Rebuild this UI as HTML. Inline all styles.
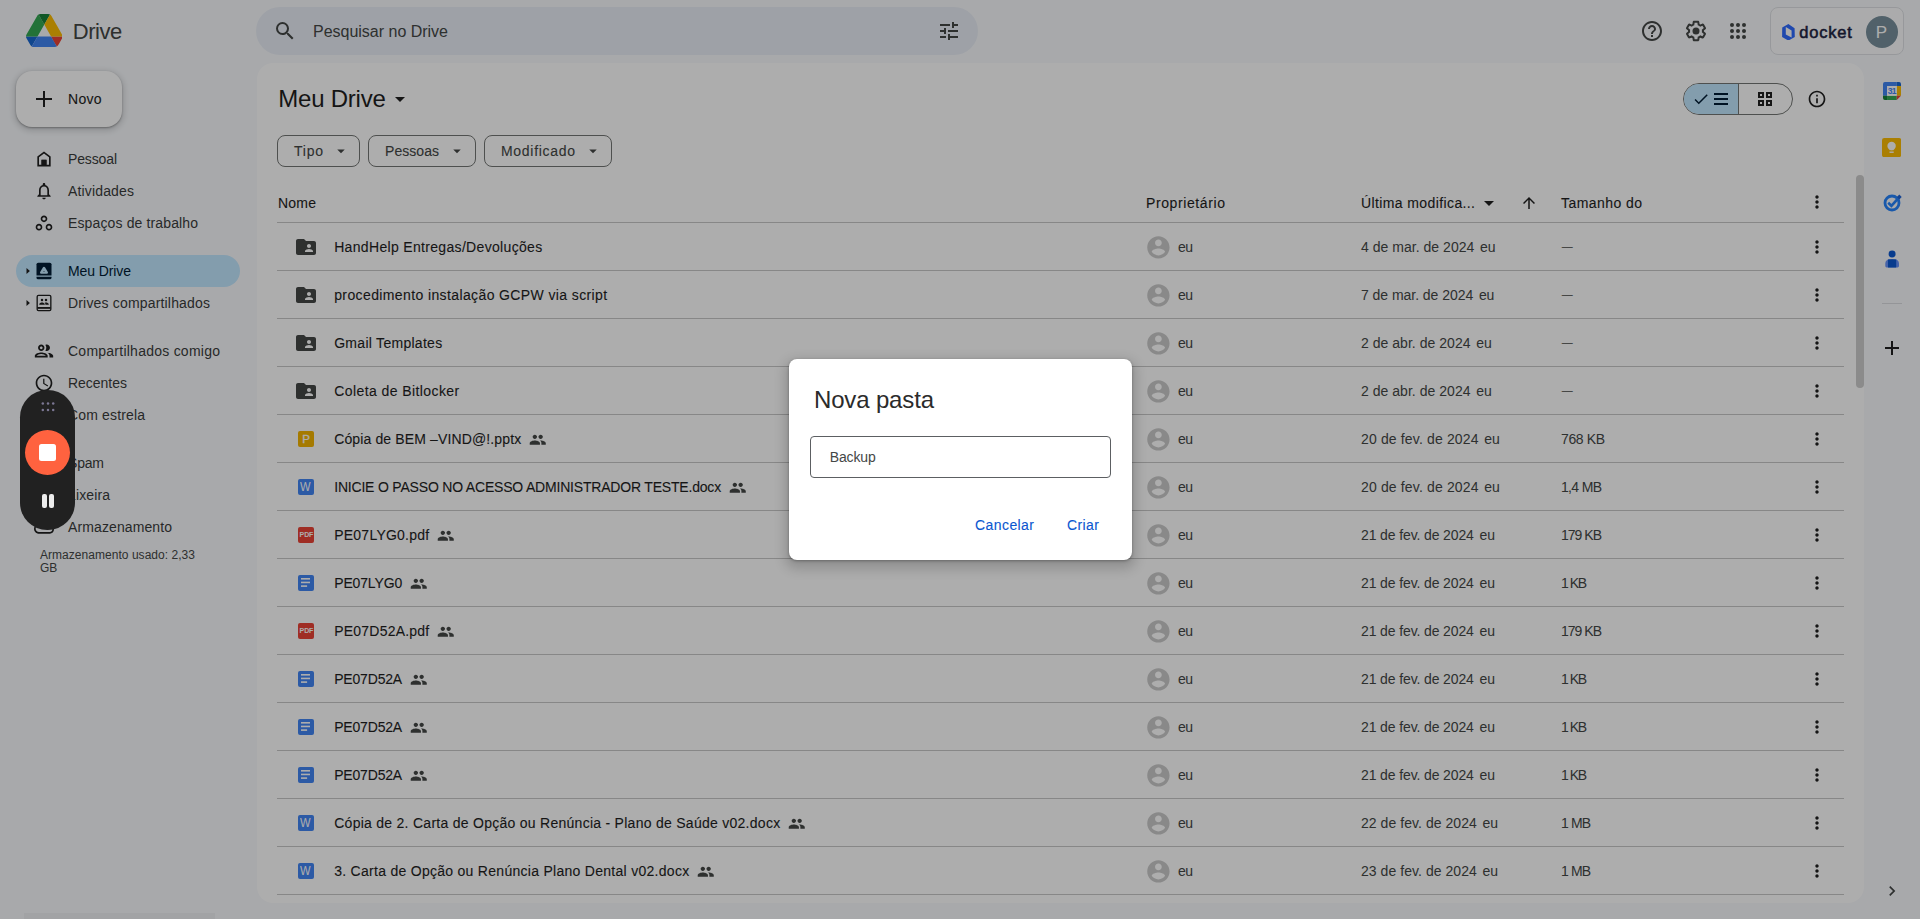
<!DOCTYPE html>
<html lang="pt-BR"><head><meta charset="utf-8"><title>Meu Drive - Google Drive</title>
<style>
*{box-sizing:border-box;margin:0;padding:0}
html,body{width:1920px;height:919px;overflow:hidden;background:#f8fafd;font-family:"Liberation Sans",sans-serif}
#app{position:relative;width:1920px;height:919px;overflow:hidden}
.t{position:absolute;white-space:nowrap;font-family:"Liberation Sans",sans-serif}
.i{position:absolute;display:block}
.b{position:absolute}
.ln{position:absolute;left:277px;width:1567px;height:1px;background:#c7c7c7}
</style></head><body><div id="app">

<svg class="i" style="left:25.600px;top:13.900px" width="36.600" height="33" viewBox="0 0 87.3 78" preserveAspectRatio="none">
<path d="m6.600 66.850 3.850 6.650c.800 1.400 1.950 2.500 3.300 3.300l13.750-23.800h-27.500c0 1.550.400 3.100 1.200 4.500z" fill="#1967d2"/>
<path d="m43.650 25-13.750-23.800c-1.350.800-2.500 1.900-3.300 3.300l-25.400 44a9.060 9.060 0 0 0 -1.200 4.500h27.500z" fill="#34a853"/>
<path d="m73.550 76.800c1.350-.800 2.500-1.900 3.300-3.300l1.600-2.750 7.650-13.250c.800-1.400 1.200-2.950 1.200-4.500h-27.502l5.852 11.500z" fill="#ea4335"/>
<path d="m43.650 25 13.750-23.800c-1.350-.800-2.900-1.200-4.500-1.200h-18.500c-1.600 0-3.150.450-4.500 1.200z" fill="#188038"/>
<path d="m59.800 53h-32.300l-13.750 23.800c1.350.800 2.900 1.200 4.500 1.200h50.800c1.600 0 3.150-.450 4.500-1.200z" fill="#4285f4"/>
<path d="m73.400 26.500-12.700-22c-.800-1.400-1.950-2.500-3.300-3.300l-13.750 23.800 16.150 28h27.450c0-1.550-.400-3.100-1.200-4.500z" fill="#fbbc04"/>
</svg>
<span id="t1" class="t" style="left:72.8px;top:17.6px;font-size:22px;line-height:28px;color:#444746;letter-spacing:-0.461px;">Drive</span>
<div class="b" style="left:256px;top:7px;width:722px;height:48px;border-radius:24px;background:#e9eef6"></div>
<svg class="i" style="left:272.8px;top:19px;" width="24" height="24" viewBox="0 0 24 24" fill="#444746"><path d="M15.5 14h-.79l-.28-.27A6.471 6.471 0 0 0 16 9.5 6.5 6.5 0 1 0 9.5 16c1.61 0 3.09-.59 4.23-1.57l.27.28v.79l5 4.99L20.49 19l-4.99-5zm-6 0C7.01 14 5 11.99 5 9.5S7.01 5 9.5 5 14 7.01 14 9.5 11.99 14 9.5 14z"/></svg>
<span id="t2" class="t" style="left:313px;top:20px;font-size:16px;line-height:24px;color:#444746;letter-spacing:-0.010px;">Pesquisar no Drive</span>
<svg class="i" style="left:936.7px;top:19px;" width="24" height="24" viewBox="0 0 24 24" fill="#444746"><path d="M3 17v2h6v-2H3zM3 5v2h10V5H3zm10 16v-2h8v-2h-8v-2h-2v6h2zM7 9v2H3v2h4v2h2V9H7zm14 4v-2H11v2h10zm-6-4h2V7h4V5h-4V3h-2v6z"/></svg>
<svg class="i" style="left:1640px;top:19px;" width="24" height="24" viewBox="0 0 24 24" fill="#444746"><path d="M11 18h2v-2h-2v2zm1-16C6.48 2 2 6.48 2 12s4.48 10 10 10 10-4.48 10-10S17.52 2 12 2zm0 18c-4.41 0-8-3.59-8-8s3.59-8 8-8 8 3.59 8 8-3.59 8-8 8zm0-14c-2.21 0-4 1.79-4 4h2c0-1.1.9-2 2-2s2 .9 2 2c0 2-3 1.75-3 5h2c0-2.25 3-2.5 3-5 0-2.21-1.79-4-4-4z"/></svg>
<svg class="i" style="left:1684px;top:19px;" width="24" height="24" viewBox="0 0 24 24" fill="#444746"><path d="M13.85 22.25h-3.7c-.74 0-1.36-.54-1.45-1.27l-.27-1.89c-.27-.14-.53-.29-.79-.46l-1.8.72c-.7.26-1.47-.03-1.81-.65L2.2 15.53c-.35-.66-.2-1.44.36-1.88l1.53-1.19c-.01-.15-.02-.3-.02-.46 0-.15.01-.31.02-.46l-1.52-1.19c-.59-.45-.74-1.26-.37-1.88l1.85-3.19c.34-.62 1.11-.9 1.79-.63l1.81.73c.26-.17.52-.32.78-.46l.27-1.91c.09-.7.71-1.25 1.44-1.25h3.7c.74 0 1.36.54 1.45 1.27l.27 1.89c.27.14.53.29.79.46l1.8-.72c.71-.26 1.48.03 1.82.65l1.84 3.18c.36.66.2 1.44-.36 1.88l-1.52 1.19c.01.15.02.3.02.46s-.01.31-.02.46l1.52 1.19c.56.45.72 1.23.37 1.86l-1.86 3.22c-.34.62-1.11.9-1.8.63l-1.8-.72c-.26.17-.52.32-.78.46l-.27 1.91c-.1.68-.72 1.22-1.46 1.22zm-3.23-2h2.76l.37-2.55.53-.22c.44-.18.88-.44 1.34-.78l.45-.34 2.38.96 1.38-2.4-2.03-1.58.07-.56c.03-.26.06-.51.06-.78s-.03-.53-.06-.78l-.07-.56 2.03-1.58-1.39-2.4-2.39.96-.45-.35c-.42-.32-.87-.58-1.33-.77l-.52-.22-.37-2.55h-2.76l-.37 2.55-.53.21c-.44.19-.88.44-1.34.79l-.45.33-2.38-.95-1.39 2.39 2.03 1.58-.07.56a7 7 0 0 0-.06.79c0 .26.02.53.06.78l.07.56-2.03 1.58 1.38 2.4 2.39-.96.45.35c.43.33.86.58 1.33.77l.53.22.38 2.55z"/><circle cx="12" cy="12" r="3.5"/></svg>
<svg class="i" style="left:1726px;top:19px;" width="24" height="24" viewBox="0 0 24 24" fill="#444746"><circle cx="6" cy="6" r="2"/><circle cx="12" cy="6" r="2"/><circle cx="18" cy="6" r="2"/><circle cx="6" cy="12" r="2"/><circle cx="12" cy="12" r="2"/><circle cx="18" cy="12" r="2"/><circle cx="6" cy="18" r="2"/><circle cx="12" cy="18" r="2"/><circle cx="18" cy="18" r="2"/></svg>
<div class="b" style="left:1770px;top:7px;width:134px;height:48px;border-radius:8px;border:1px solid #dfe1e5;background:#fdfdfe"></div>
<svg class="i" style="left:1781.900px;top:23.600px" width="13" height="16.600" viewBox="0 0 13 16.600"><path d="M6.400 0 12.600 4.200 12.800 13 6.400 16.600.1 13 .2 3.500zM3.800 3v7.400l5.800 3.100V6.400z" fill="#2f6bff" fill-rule="evenodd"/></svg>
<span id="t3" class="t" style="left:1799.3px;top:21.1px;font-size:16.5px;line-height:22px;color:#202342;letter-spacing:0.775px;-webkit-text-stroke:.55px #202342;">docket</span>
<div class="b" style="left:1866px;top:16px;width:32px;height:32px;border-radius:50%;background:#78909c"></div>
<span id="t4" class="t" style="left:1875.7px;top:20.5px;font-size:17px;line-height:24px;color:#ffffff;">P</span>
<div class="b" style="left:16px;top:71px;width:106px;height:56px;border-radius:16px;background:#fff;box-shadow:0 1px 2px rgba(0,0,0,.3),0 2px 6px 2px rgba(0,0,0,.15)"></div>
<svg class="i" style="left:32px;top:87px;" width="24" height="24" viewBox="0 0 24 24" fill="#1f1f1f"><path d="M20 13h-7v7h-2v-7H4v-2h7V4h2v7h7v2z"/></svg>
<span id="t5" class="t" style="left:68px;top:89px;font-size:14px;line-height:20px;color:#1f1f1f;letter-spacing:0.271px;-webkit-text-stroke:0.1px #1f1f1f;">Novo</span>
<div class="b" style="left:16px;top:255px;width:224px;height:32px;border-radius:16px;background:#c2e7ff"></div>
<svg class="i" style="left:34px;top:149px;" width="20" height="20" viewBox="0 0 24 24" fill="#1f1f1f"><path d="M12 3L4 9v12h16V9l-8-6zm6 16h-3v-6H9v6H6v-9l6-4.500 6 4.500v9z"/><rect x="9" y="13" width="6" height="6"/></svg>
<span id="t6" class="t" style="left:68px;top:149px;font-size:14px;line-height:20px;color:#3a3c3b;letter-spacing:-0.135px;">Pessoal</span>
<svg class="i" style="left:34px;top:181px;" width="20" height="20" viewBox="0 0 24 24" fill="#1f1f1f"><path d="M12 22c1.1 0 2-.9 2-2h-4c0 1.1.9 2 2 2zm6-6v-5c0-3.070-1.630-5.640-4.500-6.320V4c0-.830-.670-1.500-1.500-1.500s-1.500.670-1.500 1.500v.680C7.640 5.360 6 7.920 6 11v5l-2 2v1h16v-1l-2-2zm-2 1H8v-6c0-2.480 1.510-4.500 4-4.500s4 2.020 4 4.500v6z"/></svg>
<span id="t7" class="t" style="left:68px;top:181px;font-size:14px;line-height:20px;color:#3a3c3b;letter-spacing:0.156px;">Atividades</span>
<svg class="i" style="left:34px;top:213px;" width="20" height="20" viewBox="0 0 24 24" fill="#1f1f1f"><path d="M6 15c1.1 0 2 .9 2 2s-.9 2-2 2-2-.9-2-2 .9-2 2-2m0-2c-2.200 0-4 1.800-4 4s1.800 4 4 4 4-1.800 4-4-1.800-4-4-4zm6-8c1.100 0 2 .900 2 2s-.900 2-2 2-2-.900-2-2 .900-2 2-2m0-2C9.800 3 8 4.800 8 7s1.800 4 4 4 4-1.800 4-4-1.800-4-4-4zm6 12c1.100 0 2 .900 2 2s-.900 2-2 2-2-.900-2-2 .900-2 2-2m0-2c-2.200 0-4 1.800-4 4s1.800 4 4 4 4-1.800 4-4-1.800-4-4-4z"/></svg>
<span id="t8" class="t" style="left:68px;top:213px;font-size:14px;line-height:20px;color:#3a3c3b;letter-spacing:0.131px;">Espaços de trabalho</span>
<svg class="i" style="left:34px;top:261px;" width="20" height="20" viewBox="0 0 24 24" fill="#001d35"><path d="M5 2h14a2 2 0 0 1 2 2v13.500H3V4a2 2 0 0 1 2-2z"/><path d="M3 19h18v1a2 2 0 0 1-2 2H5a2 2 0 0 1-2-2z"/><path d="M12 8.300 15.400 13.900H8.600z" fill="none" stroke="#c2e7ff" stroke-width="2.800" stroke-linejoin="round"/></svg>
<span id="t9" class="t" style="left:68px;top:261px;font-size:14px;line-height:20px;color:#001d35;letter-spacing:-0.100px;">Meu Drive</span>
<svg class="i" style="left:34px;top:293px;" width="20" height="20" viewBox="0 0 24 24" fill="#1f1f1f"><rect x="3.800" y="2.800" width="16.400" height="18.400" rx="1.600" fill="none" stroke="#1f1f1f" stroke-width="1.600"/><rect x="4" y="16.800" width="16" height="2.200"/><circle cx="9.600" cy="8.300" r="1.500"/><circle cx="14.400" cy="8.300" r="1.500"/><path d="M6.300 13.600c0-1.500 2.200-2.300 3.300-2.300s3.300.800 3.300 2.300V14H6.300z"/><path d="M13.700 14v-.400c0-.800-.300-1.400-.900-1.900.500-.200 1.100-.300 1.600-.300 1.100 0 3.300.700 3.300 2.200V14z"/></svg>
<span id="t10" class="t" style="left:68px;top:293px;font-size:14px;line-height:20px;color:#3a3c3b;letter-spacing:0.175px;">Drives compartilhados</span>
<svg class="i" style="left:33px;top:340px;" width="22" height="22" viewBox="0 0 24 24" fill="#1f1f1f"><path fill-rule="evenodd" d="M9 13.600c-2.400 0-7 1.200-7 3.650V19h14v-1.750c0-2.450-4.600-3.650-7-3.650zM3.900 17.300c.700-.900 3-1.950 5.100-1.950s4.400 1.050 5.100 1.950zM9 12c1.930 0 3.500-1.570 3.500-3.500S10.930 5 9 5 5.500 6.570 5.500 8.500 7.070 12 9 12zm0-5c.830 0 1.500.670 1.500 1.500S9.830 10 9 10s-1.500-.670-1.500-1.500S8.170 7 9 7zm7.040 6.810c1.160.840 1.960 1.960 1.960 3.440V19h4v-1.750c0-2.020-3.500-3.170-5.960-3.440zM15 12c1.930 0 3.500-1.570 3.500-3.500S16.930 5 15 5c-.540 0-1.040.130-1.500.350.630.890 1 1.980 1 3.150s-.370 2.260-1 3.150c.460.220.960.350 1.500.350z"/></svg>
<span id="t11" class="t" style="left:68px;top:341px;font-size:14px;line-height:20px;color:#3a3c3b;letter-spacing:0.246px;">Compartilhados comigo</span>
<svg class="i" style="left:34px;top:373px;" width="20" height="20" viewBox="0 0 24 24" fill="#1f1f1f"><path d="M11.990 2C6.470 2 2 6.480 2 12s4.470 10 9.990 10C17.520 22 22 17.520 22 12S17.520 2 11.990 2zM12 20c-4.420 0-8-3.580-8-8s3.580-8 8-8 8 3.580 8 8-3.580 8-8 8zm.5-13H11v6l5.250 3.150.750-1.230-4.500-2.670z"/></svg>
<span id="t12" class="t" style="left:68px;top:373px;font-size:14px;line-height:20px;color:#3a3c3b;letter-spacing:-0.022px;">Recentes</span>
<span id="t13" class="t" style="left:68px;top:405px;font-size:14px;line-height:20px;color:#3a3c3b;letter-spacing:0.153px;">Com estrela</span>
<span id="t14" class="t" style="left:68px;top:453px;font-size:14px;line-height:20px;color:#3a3c3b;letter-spacing:-0.193px;">Spam</span>
<span id="t15" class="t" style="left:68px;top:485px;font-size:14px;line-height:20px;color:#3a3c3b;letter-spacing:0.125px;">Lixeira</span>
<svg class="i" style="left:34px;top:517px;" width="20" height="20" viewBox="0 0 24 24" fill="#1f1f1f"><path d="M19.350 10.040C18.670 6.590 15.640 4 12 4 9.110 4 6.600 5.640 5.350 8.040 2.340 8.360 0 10.910 0 14c0 3.310 2.690 6 6 6h13c2.760 0 5-2.240 5-5 0-2.640-2.050-4.780-4.650-4.960zM19 18H6c-2.210 0-4-1.790-4-4 0-2.050 1.530-3.760 3.560-3.970l1.070-.110.500-.950C8.080 7.140 9.940 6 12 6c2.620 0 4.880 1.860 5.390 4.430l.300 1.500 1.530.110c1.560.100 2.780 1.410 2.780 2.960 0 1.650-1.350 3-3 3z"/></svg>
<span id="t16" class="t" style="left:68px;top:517px;font-size:14px;line-height:20px;color:#3a3c3b;letter-spacing:0.107px;">Armazenamento</span>
<svg class="i" style="left:24px;top:267px" width="8" height="8" viewBox="0 0 8 8"><path d="M2.500 1.100l3.400 2.900-3.400 2.900z" fill="#1f1f1f"/></svg>
<svg class="i" style="left:24px;top:299px" width="8" height="8" viewBox="0 0 8 8"><path d="M2.500 1.100l3.400 2.900-3.400 2.900z" fill="#1f1f1f"/></svg>
<span id="t17" class="t" style="left:40px;top:547.5px;font-size:12px;line-height:14px;color:#444746;letter-spacing:0.037px;">Armazenamento usado: 2,33</span>
<span id="t18" class="t" style="left:40px;top:561px;font-size:12px;line-height:14px;color:#444746;">GB</span>
<div class="b" style="left:24px;top:913px;width:191px;height:6px;background:#eff1f4"></div>
<div class="b" style="left:257px;top:63px;width:1607px;height:840px;border-radius:16px;background:#fff"></div>
<span id="t19" class="t" style="left:278.3px;top:83px;font-size:24px;line-height:32px;color:#1f1f1f;letter-spacing:-0.232px;">Meu Drive</span>
<svg class="i" style="left:388px;top:87px;" width="24" height="24" viewBox="0 0 24 24" fill="#1f1f1f"><path d="M7 10l5 5 5-5z"/></svg>
<div class="b" style="left:277px;top:135px;width:83px;height:32px;border-radius:8px;border:1px solid #747775"></div>
<span id="t20" class="t" style="left:294px;top:141px;font-size:14px;line-height:20px;color:#444746;letter-spacing:0.760px;-webkit-text-stroke:0.1px #444746;">Tipo</span>
<svg class="i" style="left:332px;top:142px;" width="18" height="18" viewBox="0 0 24 24" fill="#444746"><path d="M7 10l5 5 5-5z"/></svg>
<div class="b" style="left:368px;top:135px;width:108px;height:32px;border-radius:8px;border:1px solid #747775"></div>
<span id="t21" class="t" style="left:385px;top:141px;font-size:14px;line-height:20px;color:#444746;letter-spacing:0.049px;-webkit-text-stroke:0.1px #444746;">Pessoas</span>
<svg class="i" style="left:448px;top:142px;" width="18" height="18" viewBox="0 0 24 24" fill="#444746"><path d="M7 10l5 5 5-5z"/></svg>
<div class="b" style="left:484px;top:135px;width:128px;height:32px;border-radius:8px;border:1px solid #747775"></div>
<span id="t22" class="t" style="left:501px;top:141px;font-size:14px;line-height:20px;color:#444746;letter-spacing:0.700px;-webkit-text-stroke:0.1px #444746;">Modificado</span>
<svg class="i" style="left:584px;top:142px;" width="18" height="18" viewBox="0 0 24 24" fill="#444746"><path d="M7 10l5 5 5-5z"/></svg>
<div class="b" style="left:1683px;top:83px;width:110px;height:32px;border-radius:16px;border:1px solid #747775;overflow:hidden"><div style="position:absolute;left:0;top:0;width:55px;height:30px;background:#c2e7ff;border-right:1px solid #747775"></div></div>
<svg class="i" style="left:1692px;top:90px;" width="18" height="18" viewBox="0 0 24 24" fill="#001d35"><path d="M9 16.17L4.83 12l-1.42 1.41L9 19 21 7l-1.41-1.41z"/></svg>
<svg class="i" style="left:1714px;top:93px" width="14" height="12" viewBox="0 0 14 12" fill="#001d35"><rect y="0" width="14" height="2"/><rect y="5" width="14" height="2"/><rect y="10" width="14" height="2"/></svg>
<svg class="i" style="left:1758px;top:92px" width="14" height="14" viewBox="0 0 14 14" fill="none" stroke="#1f1f1f" stroke-width="2"><rect x="1" y="1" width="4" height="4"/><rect x="9" y="1" width="4" height="4"/><rect x="1" y="9" width="4" height="4"/><rect x="9" y="9" width="4" height="4"/></svg>
<svg class="i" style="left:1807px;top:89px;" width="20" height="20" viewBox="0 0 24 24" fill="#1f1f1f"><path d="M11 7h2v2h-2zm0 4h2v6h-2zm1-9C6.48 2 2 6.48 2 12s4.480 10 10 10 10-4.480 10-10S17.520 2 12 2zm0 18c-4.410 0-8-3.590-8-8s3.590-8 8-8 8 3.590 8 8-3.590 8-8 8z"/></svg>
<span id="t23" class="t" style="left:278px;top:193px;font-size:14px;line-height:20px;color:#1f1f1f;letter-spacing:0.214px;-webkit-text-stroke:0.1px #1f1f1f;">Nome</span>
<span id="t24" class="t" style="left:1146px;top:193px;font-size:14px;line-height:20px;color:#1f1f1f;letter-spacing:0.602px;-webkit-text-stroke:0.1px #1f1f1f;">Proprietário</span>
<span id="t25" class="t" style="left:1361px;top:193px;font-size:14px;line-height:20px;color:#1f1f1f;letter-spacing:0.391px;-webkit-text-stroke:0.1px #1f1f1f;">Última modifica...</span>
<svg class="i" style="left:1477px;top:191px;" width="24" height="24" viewBox="0 0 24 24" fill="#1f1f1f"><path d="M7 10l5 5 5-5z"/></svg>
<svg class="i" style="left:1519.5px;top:193.5px;" width="18" height="18" viewBox="0 0 24 24" fill="#1f1f1f"><path d="M4 12l1.41 1.41L11 7.83V20h2V7.83l5.58 5.59L20 12l-8-8-8 8z"/></svg>
<span id="t26" class="t" style="left:1561px;top:193px;font-size:14px;line-height:20px;color:#1f1f1f;letter-spacing:0.438px;-webkit-text-stroke:0.1px #1f1f1f;">Tamanho do</span>
<svg class="i" style="left:1807px;top:192px;" width="20" height="20" viewBox="0 0 24 24" fill="#1f1f1f"><path d="M12 8c1.1 0 2-.9 2-2s-.9-2-2-2-2 .9-2 2 .9 2 2 2zm0 2c-1.1 0-2 .9-2 2s.9 2 2 2 2-.9 2-2-.9-2-2-2zm0 6c-1.1 0-2 .9-2 2s.9 2 2 2 2-.9 2-2-.9-2-2-2z"/></svg>
<div class="ln" style="top:222px"></div>
<svg class="i" style="left:294px;top:235px;" width="24" height="24" viewBox="0 0 24 24" fill="#444746"><path d="M20 6h-8l-2-2H4c-1.1 0-1.99.9-1.99 2L2 18c0 1.1.9 2 2 2h16c1.1 0 2-.9 2-2V8c0-1.1-.9-2-2-2zm-5 3c1.1 0 2 .9 2 2s-.9 2-2 2-2-.9-2-2 .9-2 2-2zm4 8h-8v-1c0-1.33 2.67-2 4-2s4 .67 4 2v1z"/></svg>
<span id="t27" class="t" style="left:334.2px;top:237px;font-size:14px;line-height:20px;color:#1f1f1f;letter-spacing:0.325px;-webkit-text-stroke:0.1px #1f1f1f;">HandHelp Entregas/Devoluções</span>
<svg class="i" style="left:1144.6px;top:233.6px;" width="26.8" height="26.8" viewBox="0 0 24 24" fill="#cbcbcb"><path d="M12 2C6.48 2 2 6.48 2 12s4.480 10 10 10 10-4.480 10-10S17.520 2 12 2zm0 3c1.660 0 3 1.340 3 3s-1.340 3-3 3-3-1.340-3-3 1.340-3 3-3zm0 14.200c-2.500 0-4.710-1.280-6-3.220.030-1.990 4-3.080 6-3.080 1.990 0 5.970 1.090 6 3.080-1.290 1.940-3.500 3.220-6 3.220z"/></svg>
<span id="t28" class="t" style="left:1178px;top:237px;font-size:14px;line-height:20px;color:#444746;letter-spacing:-0.578px;">eu</span>
<span id="t29" class="t" style="left:1361px;top:237px;font-size:14px;line-height:20px;color:#444746;letter-spacing:0.027px;">4 de mar. de 2024</span>
<span id="t30" class="t" style="left:1480px;top:237px;font-size:14px;line-height:20px;color:#444746;letter-spacing:-0.078px;">eu</span>
<span id="t31" class="t" style="left:1561.8px;top:236.4px;font-size:11px;line-height:20px;color:#444746;">—</span>
<svg class="i" style="left:1807px;top:237px;" width="20" height="20" viewBox="0 0 24 24" fill="#1f1f1f"><path d="M12 8c1.1 0 2-.9 2-2s-.9-2-2-2-2 .9-2 2 .9 2 2 2zm0 2c-1.1 0-2 .9-2 2s.9 2 2 2 2-.9 2-2-.9-2-2-2zm0 6c-1.1 0-2 .9-2 2s.9 2 2 2 2-.9 2-2-.9-2-2-2z"/></svg>
<div class="ln" style="top:270px"></div>
<svg class="i" style="left:294px;top:283px;" width="24" height="24" viewBox="0 0 24 24" fill="#444746"><path d="M20 6h-8l-2-2H4c-1.1 0-1.99.9-1.99 2L2 18c0 1.1.9 2 2 2h16c1.1 0 2-.9 2-2V8c0-1.1-.9-2-2-2zm-5 3c1.1 0 2 .9 2 2s-.9 2-2 2-2-.9-2-2 .9-2 2-2zm4 8h-8v-1c0-1.33 2.67-2 4-2s4 .67 4 2v1z"/></svg>
<span id="t32" class="t" style="left:334.2px;top:285px;font-size:14px;line-height:20px;color:#1f1f1f;letter-spacing:0.386px;-webkit-text-stroke:0.1px #1f1f1f;">procedimento instalação GCPW via script</span>
<svg class="i" style="left:1144.6px;top:281.6px;" width="26.8" height="26.8" viewBox="0 0 24 24" fill="#cbcbcb"><path d="M12 2C6.48 2 2 6.48 2 12s4.480 10 10 10 10-4.480 10-10S17.520 2 12 2zm0 3c1.660 0 3 1.340 3 3s-1.340 3-3 3-3-1.340-3-3 1.340-3 3-3zm0 14.200c-2.500 0-4.710-1.280-6-3.220.030-1.990 4-3.080 6-3.080 1.990 0 5.970 1.090 6 3.080-1.290 1.940-3.500 3.220-6 3.220z"/></svg>
<span id="t33" class="t" style="left:1178px;top:285px;font-size:14px;line-height:20px;color:#444746;letter-spacing:-0.578px;">eu</span>
<span id="t34" class="t" style="left:1361px;top:285px;font-size:14px;line-height:20px;color:#444746;letter-spacing:-0.042px;">7 de mar. de 2024</span>
<span id="t35" class="t" style="left:1478.9px;top:285px;font-size:14px;line-height:20px;color:#444746;letter-spacing:-0.078px;">eu</span>
<span id="t36" class="t" style="left:1561.8px;top:284.4px;font-size:11px;line-height:20px;color:#444746;">—</span>
<svg class="i" style="left:1807px;top:285px;" width="20" height="20" viewBox="0 0 24 24" fill="#1f1f1f"><path d="M12 8c1.1 0 2-.9 2-2s-.9-2-2-2-2 .9-2 2 .9 2 2 2zm0 2c-1.1 0-2 .9-2 2s.9 2 2 2 2-.9 2-2-.9-2-2-2zm0 6c-1.1 0-2 .9-2 2s.9 2 2 2 2-.9 2-2-.9-2-2-2z"/></svg>
<div class="ln" style="top:318px"></div>
<svg class="i" style="left:294px;top:331px;" width="24" height="24" viewBox="0 0 24 24" fill="#444746"><path d="M20 6h-8l-2-2H4c-1.1 0-1.99.9-1.99 2L2 18c0 1.1.9 2 2 2h16c1.1 0 2-.9 2-2V8c0-1.1-.9-2-2-2zm-5 3c1.1 0 2 .9 2 2s-.9 2-2 2-2-.9-2-2 .9-2 2-2zm4 8h-8v-1c0-1.33 2.67-2 4-2s4 .67 4 2v1z"/></svg>
<span id="t37" class="t" style="left:334.2px;top:333px;font-size:14px;line-height:20px;color:#1f1f1f;letter-spacing:0.285px;-webkit-text-stroke:0.1px #1f1f1f;">Gmail Templates</span>
<svg class="i" style="left:1144.6px;top:329.6px;" width="26.8" height="26.8" viewBox="0 0 24 24" fill="#cbcbcb"><path d="M12 2C6.48 2 2 6.48 2 12s4.480 10 10 10 10-4.480 10-10S17.520 2 12 2zm0 3c1.660 0 3 1.340 3 3s-1.340 3-3 3-3-1.340-3-3 1.340-3 3-3zm0 14.200c-2.500 0-4.710-1.280-6-3.220.030-1.990 4-3.080 6-3.080 1.990 0 5.970 1.090 6 3.080-1.290 1.940-3.500 3.220-6 3.220z"/></svg>
<span id="t38" class="t" style="left:1178px;top:333px;font-size:14px;line-height:20px;color:#444746;letter-spacing:-0.578px;">eu</span>
<span id="t39" class="t" style="left:1361px;top:333px;font-size:14px;line-height:20px;color:#444746;letter-spacing:0.031px;">2 de abr. de 2024</span>
<span id="t40" class="t" style="left:1476.2px;top:333px;font-size:14px;line-height:20px;color:#444746;letter-spacing:-0.078px;">eu</span>
<span id="t41" class="t" style="left:1561.8px;top:332.4px;font-size:11px;line-height:20px;color:#444746;">—</span>
<svg class="i" style="left:1807px;top:333px;" width="20" height="20" viewBox="0 0 24 24" fill="#1f1f1f"><path d="M12 8c1.1 0 2-.9 2-2s-.9-2-2-2-2 .9-2 2 .9 2 2 2zm0 2c-1.1 0-2 .9-2 2s.9 2 2 2 2-.9 2-2-.9-2-2-2zm0 6c-1.1 0-2 .9-2 2s.9 2 2 2 2-.9 2-2-.9-2-2-2z"/></svg>
<div class="ln" style="top:366px"></div>
<svg class="i" style="left:294px;top:379px;" width="24" height="24" viewBox="0 0 24 24" fill="#444746"><path d="M20 6h-8l-2-2H4c-1.1 0-1.99.9-1.99 2L2 18c0 1.1.9 2 2 2h16c1.1 0 2-.9 2-2V8c0-1.1-.9-2-2-2zm-5 3c1.1 0 2 .9 2 2s-.9 2-2 2-2-.9-2-2 .9-2 2-2zm4 8h-8v-1c0-1.33 2.67-2 4-2s4 .67 4 2v1z"/></svg>
<span id="t42" class="t" style="left:334.2px;top:381px;font-size:14px;line-height:20px;color:#1f1f1f;letter-spacing:0.416px;-webkit-text-stroke:0.1px #1f1f1f;">Coleta de Bitlocker</span>
<svg class="i" style="left:1144.6px;top:377.6px;" width="26.8" height="26.8" viewBox="0 0 24 24" fill="#cbcbcb"><path d="M12 2C6.48 2 2 6.48 2 12s4.480 10 10 10 10-4.480 10-10S17.520 2 12 2zm0 3c1.660 0 3 1.340 3 3s-1.340 3-3 3-3-1.340-3-3 1.340-3 3-3zm0 14.200c-2.500 0-4.710-1.280-6-3.220.030-1.990 4-3.080 6-3.080 1.990 0 5.970 1.090 6 3.080-1.290 1.940-3.500 3.220-6 3.220z"/></svg>
<span id="t43" class="t" style="left:1178px;top:381px;font-size:14px;line-height:20px;color:#444746;letter-spacing:-0.578px;">eu</span>
<span id="t44" class="t" style="left:1361px;top:381px;font-size:14px;line-height:20px;color:#444746;letter-spacing:0.031px;">2 de abr. de 2024</span>
<span id="t45" class="t" style="left:1476.2px;top:381px;font-size:14px;line-height:20px;color:#444746;letter-spacing:-0.078px;">eu</span>
<span id="t46" class="t" style="left:1561.8px;top:380.4px;font-size:11px;line-height:20px;color:#444746;">—</span>
<svg class="i" style="left:1807px;top:381px;" width="20" height="20" viewBox="0 0 24 24" fill="#1f1f1f"><path d="M12 8c1.1 0 2-.9 2-2s-.9-2-2-2-2 .9-2 2 .9 2 2 2zm0 2c-1.1 0-2 .9-2 2s.9 2 2 2 2-.9 2-2-.9-2-2-2zm0 6c-1.1 0-2 .9-2 2s.9 2 2 2 2-.9 2-2-.9-2-2-2z"/></svg>
<div class="ln" style="top:414px"></div>
<div class="b" style="left:298px;top:431px;width:16px;height:16px;border-radius:2px;background:#f4b400"></div><span id="t47" class="t" style="left:302.2px;top:432.4px;font-size:11.5px;line-height:14px;color:#fff;-webkit-text-stroke:.3px #fff;">P</span>
<span id="t48" class="t" style="left:334.2px;top:429px;font-size:14px;line-height:20px;color:#1f1f1f;letter-spacing:0.131px;-webkit-text-stroke:0.1px #1f1f1f;">Cópia de BEM –VIND@!.pptx</span>
<svg class="i" style="left:528.55px;top:430.55px;" width="17.5" height="17.5" viewBox="0 0 24 24" fill="#444746"><path d="M16 11c1.66 0 2.99-1.34 2.99-3S17.66 5 16 5c-1.66 0-3 1.34-3 3s1.34 3 3 3zm-8 0c1.66 0 2.99-1.34 2.99-3S9.66 5 8 5C6.34 5 5 6.34 5 8s1.34 3 3 3zm0 2c-2.33 0-7 1.17-7 3.5V19h14v-2.500c0-2.330-4.670-3.500-7-3.500zm8 0c-.29 0-.62.02-.97.05 1.160.840 1.970 1.970 1.970 3.450V19h6v-2.500c0-2.330-4.670-3.500-7-3.500z"/></svg>
<svg class="i" style="left:1144.6px;top:425.6px;" width="26.8" height="26.8" viewBox="0 0 24 24" fill="#cbcbcb"><path d="M12 2C6.48 2 2 6.48 2 12s4.480 10 10 10 10-4.480 10-10S17.520 2 12 2zm0 3c1.660 0 3 1.340 3 3s-1.340 3-3 3-3-1.340-3-3 1.340-3 3-3zm0 14.200c-2.500 0-4.710-1.280-6-3.220.030-1.990 4-3.080 6-3.080 1.990 0 5.970 1.090 6 3.080-1.290 1.940-3.500 3.220-6 3.220z"/></svg>
<span id="t49" class="t" style="left:1178px;top:429px;font-size:14px;line-height:20px;color:#444746;letter-spacing:-0.578px;">eu</span>
<span id="t50" class="t" style="left:1361px;top:429px;font-size:14px;line-height:20px;color:#444746;letter-spacing:0.150px;">20 de fev. de 2024</span>
<span id="t51" class="t" style="left:1484.2px;top:429px;font-size:14px;line-height:20px;color:#444746;letter-spacing:-0.078px;">eu</span>
<span id="t52" class="t" style="left:1561px;top:429px;font-size:14px;line-height:20px;color:#444746;letter-spacing:-0.388px;">768 KB</span>
<svg class="i" style="left:1807px;top:429px;" width="20" height="20" viewBox="0 0 24 24" fill="#1f1f1f"><path d="M12 8c1.1 0 2-.9 2-2s-.9-2-2-2-2 .9-2 2 .9 2 2 2zm0 2c-1.1 0-2 .9-2 2s.9 2 2 2 2-.9 2-2-.9-2-2-2zm0 6c-1.1 0-2 .9-2 2s.9 2 2 2 2-.9 2-2-.9-2-2-2z"/></svg>
<div class="ln" style="top:462px"></div>
<div class="b" style="left:298px;top:479px;width:16px;height:16px;border-radius:2px;background:#4285f4"></div><span id="t53" class="t" style="left:299.85px;top:480.3px;font-size:13px;line-height:14px;color:#fff;transform:scaleX(.86);transform-origin:0 50%;">W</span>
<span id="t54" class="t" style="left:334.2px;top:477px;font-size:14px;line-height:20px;color:#1f1f1f;letter-spacing:-0.193px;-webkit-text-stroke:0.1px #1f1f1f;">INICIE O PASSO NO ACESSO ADMINISTRADOR TESTE.docx</span>
<svg class="i" style="left:728.55px;top:478.55px;" width="17.5" height="17.5" viewBox="0 0 24 24" fill="#444746"><path d="M16 11c1.66 0 2.99-1.34 2.99-3S17.66 5 16 5c-1.66 0-3 1.34-3 3s1.34 3 3 3zm-8 0c1.66 0 2.99-1.34 2.99-3S9.66 5 8 5C6.34 5 5 6.34 5 8s1.34 3 3 3zm0 2c-2.33 0-7 1.17-7 3.5V19h14v-2.500c0-2.330-4.670-3.500-7-3.500zm8 0c-.29 0-.62.02-.97.05 1.160.840 1.970 1.970 1.970 3.450V19h6v-2.500c0-2.330-4.670-3.500-7-3.500z"/></svg>
<svg class="i" style="left:1144.6px;top:473.6px;" width="26.8" height="26.8" viewBox="0 0 24 24" fill="#cbcbcb"><path d="M12 2C6.48 2 2 6.48 2 12s4.480 10 10 10 10-4.480 10-10S17.520 2 12 2zm0 3c1.660 0 3 1.340 3 3s-1.340 3-3 3-3-1.340-3-3 1.340-3 3-3zm0 14.200c-2.500 0-4.710-1.280-6-3.220.030-1.990 4-3.080 6-3.080 1.990 0 5.970 1.090 6 3.080-1.290 1.940-3.500 3.220-6 3.220z"/></svg>
<span id="t55" class="t" style="left:1178px;top:477px;font-size:14px;line-height:20px;color:#444746;letter-spacing:-0.578px;">eu</span>
<span id="t56" class="t" style="left:1361px;top:477px;font-size:14px;line-height:20px;color:#444746;letter-spacing:0.150px;">20 de fev. de 2024</span>
<span id="t57" class="t" style="left:1484.2px;top:477px;font-size:14px;line-height:20px;color:#444746;letter-spacing:-0.078px;">eu</span>
<span id="t58" class="t" style="left:1561px;top:477px;font-size:14px;line-height:20px;color:#444746;letter-spacing:-0.672px;">1,4 MB</span>
<svg class="i" style="left:1807px;top:477px;" width="20" height="20" viewBox="0 0 24 24" fill="#1f1f1f"><path d="M12 8c1.1 0 2-.9 2-2s-.9-2-2-2-2 .9-2 2 .9 2 2 2zm0 2c-1.1 0-2 .9-2 2s.9 2 2 2 2-.9 2-2-.9-2-2-2zm0 6c-1.1 0-2 .9-2 2s.9 2 2 2 2-.9 2-2-.9-2-2-2z"/></svg>
<div class="ln" style="top:510px"></div>
<div class="b" style="left:298px;top:527px;width:16px;height:16px;border-radius:2px;background:#ea4335"></div><span id="t59" class="t" style="left:299.6px;top:530.4px;font-size:7px;line-height:10px;color:#fff;font-weight:700;letter-spacing:-.1px;">PDF</span>
<span id="t60" class="t" style="left:334.2px;top:525px;font-size:14px;line-height:20px;color:#1f1f1f;letter-spacing:0.239px;-webkit-text-stroke:0.1px #1f1f1f;">PE07LYG0.pdf</span>
<svg class="i" style="left:436.55px;top:526.55px;" width="17.5" height="17.5" viewBox="0 0 24 24" fill="#444746"><path d="M16 11c1.66 0 2.99-1.34 2.99-3S17.66 5 16 5c-1.66 0-3 1.34-3 3s1.34 3 3 3zm-8 0c1.66 0 2.99-1.34 2.99-3S9.66 5 8 5C6.34 5 5 6.34 5 8s1.34 3 3 3zm0 2c-2.33 0-7 1.17-7 3.5V19h14v-2.500c0-2.330-4.670-3.500-7-3.500zm8 0c-.29 0-.62.02-.97.05 1.160.840 1.970 1.970 1.970 3.450V19h6v-2.500c0-2.330-4.670-3.500-7-3.500z"/></svg>
<svg class="i" style="left:1144.6px;top:521.6px;" width="26.8" height="26.8" viewBox="0 0 24 24" fill="#cbcbcb"><path d="M12 2C6.48 2 2 6.48 2 12s4.480 10 10 10 10-4.480 10-10S17.520 2 12 2zm0 3c1.660 0 3 1.340 3 3s-1.340 3-3 3-3-1.340-3-3 1.340-3 3-3zm0 14.200c-2.500 0-4.710-1.280-6-3.220.030-1.990 4-3.080 6-3.080 1.990 0 5.970 1.090 6 3.080-1.290 1.940-3.500 3.220-6 3.220z"/></svg>
<span id="t61" class="t" style="left:1178px;top:525px;font-size:14px;line-height:20px;color:#444746;letter-spacing:-0.578px;">eu</span>
<span id="t62" class="t" style="left:1361px;top:525px;font-size:14px;line-height:20px;color:#444746;letter-spacing:-0.121px;">21 de fev. de 2024</span>
<span id="t63" class="t" style="left:1479.6px;top:525px;font-size:14px;line-height:20px;color:#444746;letter-spacing:-0.078px;">eu</span>
<span id="t64" class="t" style="left:1561px;top:525px;font-size:14px;line-height:20px;color:#444746;letter-spacing:-0.988px;">179 KB</span>
<svg class="i" style="left:1807px;top:525px;" width="20" height="20" viewBox="0 0 24 24" fill="#1f1f1f"><path d="M12 8c1.1 0 2-.9 2-2s-.9-2-2-2-2 .9-2 2 .9 2 2 2zm0 2c-1.1 0-2 .9-2 2s.9 2 2 2 2-.9 2-2-.9-2-2-2zm0 6c-1.1 0-2 .9-2 2s.9 2 2 2 2-.9 2-2-.9-2-2-2z"/></svg>
<div class="ln" style="top:558px"></div>
<div class="b" style="left:298px;top:575px;width:16px;height:16px;border-radius:2px;background:#4285f4"></div><svg class="i" style="left:301.400px;top:578.4px" width="9" height="9" viewBox="0 0 9 9" fill="#fff"><rect y="0" width="9" height="1.600"/><rect y="3.650" width="9" height="1.600"/><rect y="7.300" width="6.100" height="1.600"/></svg>
<span id="t65" class="t" style="left:334.2px;top:573px;font-size:14px;line-height:20px;color:#1f1f1f;letter-spacing:-0.145px;-webkit-text-stroke:0.1px #1f1f1f;">PE07LYG0</span>
<svg class="i" style="left:409.55px;top:574.55px;" width="17.5" height="17.5" viewBox="0 0 24 24" fill="#444746"><path d="M16 11c1.66 0 2.99-1.34 2.99-3S17.66 5 16 5c-1.66 0-3 1.34-3 3s1.34 3 3 3zm-8 0c1.66 0 2.99-1.34 2.99-3S9.66 5 8 5C6.34 5 5 6.34 5 8s1.34 3 3 3zm0 2c-2.33 0-7 1.17-7 3.5V19h14v-2.500c0-2.330-4.670-3.500-7-3.500zm8 0c-.29 0-.62.02-.97.05 1.160.840 1.970 1.970 1.970 3.450V19h6v-2.500c0-2.330-4.670-3.500-7-3.500z"/></svg>
<svg class="i" style="left:1144.6px;top:569.6px;" width="26.8" height="26.8" viewBox="0 0 24 24" fill="#cbcbcb"><path d="M12 2C6.48 2 2 6.48 2 12s4.480 10 10 10 10-4.480 10-10S17.520 2 12 2zm0 3c1.660 0 3 1.340 3 3s-1.340 3-3 3-3-1.340-3-3 1.340-3 3-3zm0 14.200c-2.500 0-4.710-1.280-6-3.220.030-1.990 4-3.080 6-3.080 1.990 0 5.970 1.090 6 3.080-1.290 1.940-3.500 3.220-6 3.220z"/></svg>
<span id="t66" class="t" style="left:1178px;top:573px;font-size:14px;line-height:20px;color:#444746;letter-spacing:-0.578px;">eu</span>
<span id="t67" class="t" style="left:1361px;top:573px;font-size:14px;line-height:20px;color:#444746;letter-spacing:-0.121px;">21 de fev. de 2024</span>
<span id="t68" class="t" style="left:1479.6px;top:573px;font-size:14px;line-height:20px;color:#444746;letter-spacing:-0.078px;">eu</span>
<span id="t69" class="t" style="left:1561px;top:573px;font-size:14px;line-height:20px;color:#444746;letter-spacing:-1.453px;">1 KB</span>
<svg class="i" style="left:1807px;top:573px;" width="20" height="20" viewBox="0 0 24 24" fill="#1f1f1f"><path d="M12 8c1.1 0 2-.9 2-2s-.9-2-2-2-2 .9-2 2 .9 2 2 2zm0 2c-1.1 0-2 .9-2 2s.9 2 2 2 2-.9 2-2-.9-2-2-2zm0 6c-1.1 0-2 .9-2 2s.9 2 2 2 2-.9 2-2-.9-2-2-2z"/></svg>
<div class="ln" style="top:606px"></div>
<div class="b" style="left:298px;top:623px;width:16px;height:16px;border-radius:2px;background:#ea4335"></div><span id="t70" class="t" style="left:299.6px;top:626.4px;font-size:7px;line-height:10px;color:#fff;font-weight:700;letter-spacing:-.1px;">PDF</span>
<span id="t71" class="t" style="left:334.2px;top:621px;font-size:14px;line-height:20px;color:#1f1f1f;letter-spacing:0.216px;-webkit-text-stroke:0.1px #1f1f1f;">PE07D52A.pdf</span>
<svg class="i" style="left:436.55px;top:622.55px;" width="17.5" height="17.5" viewBox="0 0 24 24" fill="#444746"><path d="M16 11c1.66 0 2.99-1.34 2.99-3S17.66 5 16 5c-1.66 0-3 1.34-3 3s1.34 3 3 3zm-8 0c1.66 0 2.99-1.34 2.99-3S9.66 5 8 5C6.34 5 5 6.34 5 8s1.34 3 3 3zm0 2c-2.33 0-7 1.17-7 3.5V19h14v-2.500c0-2.330-4.670-3.500-7-3.500zm8 0c-.29 0-.62.02-.97.05 1.160.840 1.970 1.970 1.970 3.450V19h6v-2.500c0-2.330-4.670-3.500-7-3.500z"/></svg>
<svg class="i" style="left:1144.6px;top:617.6px;" width="26.8" height="26.8" viewBox="0 0 24 24" fill="#cbcbcb"><path d="M12 2C6.48 2 2 6.48 2 12s4.480 10 10 10 10-4.480 10-10S17.520 2 12 2zm0 3c1.660 0 3 1.340 3 3s-1.340 3-3 3-3-1.340-3-3 1.340-3 3-3zm0 14.200c-2.500 0-4.710-1.280-6-3.220.030-1.990 4-3.080 6-3.080 1.990 0 5.970 1.090 6 3.080-1.290 1.940-3.500 3.220-6 3.220z"/></svg>
<span id="t72" class="t" style="left:1178px;top:621px;font-size:14px;line-height:20px;color:#444746;letter-spacing:-0.578px;">eu</span>
<span id="t73" class="t" style="left:1361px;top:621px;font-size:14px;line-height:20px;color:#444746;letter-spacing:-0.121px;">21 de fev. de 2024</span>
<span id="t74" class="t" style="left:1479.6px;top:621px;font-size:14px;line-height:20px;color:#444746;letter-spacing:-0.078px;">eu</span>
<span id="t75" class="t" style="left:1561px;top:621px;font-size:14px;line-height:20px;color:#444746;letter-spacing:-0.988px;">179 KB</span>
<svg class="i" style="left:1807px;top:621px;" width="20" height="20" viewBox="0 0 24 24" fill="#1f1f1f"><path d="M12 8c1.1 0 2-.9 2-2s-.9-2-2-2-2 .9-2 2 .9 2 2 2zm0 2c-1.1 0-2 .9-2 2s.9 2 2 2 2-.9 2-2-.9-2-2-2zm0 6c-1.1 0-2 .9-2 2s.9 2 2 2 2-.9 2-2-.9-2-2-2z"/></svg>
<div class="ln" style="top:654px"></div>
<div class="b" style="left:298px;top:671px;width:16px;height:16px;border-radius:2px;background:#4285f4"></div><svg class="i" style="left:301.400px;top:674.4px" width="9" height="9" viewBox="0 0 9 9" fill="#fff"><rect y="0" width="9" height="1.600"/><rect y="3.650" width="9" height="1.600"/><rect y="7.300" width="6.100" height="1.600"/></svg>
<span id="t76" class="t" style="left:334.2px;top:669px;font-size:14px;line-height:20px;color:#1f1f1f;letter-spacing:-0.183px;-webkit-text-stroke:0.1px #1f1f1f;">PE07D52A</span>
<svg class="i" style="left:409.55px;top:670.55px;" width="17.5" height="17.5" viewBox="0 0 24 24" fill="#444746"><path d="M16 11c1.66 0 2.99-1.34 2.99-3S17.66 5 16 5c-1.66 0-3 1.34-3 3s1.34 3 3 3zm-8 0c1.66 0 2.99-1.34 2.99-3S9.66 5 8 5C6.34 5 5 6.34 5 8s1.34 3 3 3zm0 2c-2.33 0-7 1.17-7 3.5V19h14v-2.500c0-2.330-4.670-3.500-7-3.500zm8 0c-.29 0-.62.02-.97.05 1.160.840 1.970 1.970 1.970 3.450V19h6v-2.500c0-2.330-4.670-3.500-7-3.500z"/></svg>
<svg class="i" style="left:1144.6px;top:665.6px;" width="26.8" height="26.8" viewBox="0 0 24 24" fill="#cbcbcb"><path d="M12 2C6.48 2 2 6.48 2 12s4.480 10 10 10 10-4.480 10-10S17.520 2 12 2zm0 3c1.660 0 3 1.340 3 3s-1.340 3-3 3-3-1.340-3-3 1.340-3 3-3zm0 14.200c-2.500 0-4.710-1.280-6-3.220.030-1.990 4-3.080 6-3.080 1.990 0 5.970 1.090 6 3.080-1.290 1.940-3.500 3.220-6 3.220z"/></svg>
<span id="t77" class="t" style="left:1178px;top:669px;font-size:14px;line-height:20px;color:#444746;letter-spacing:-0.578px;">eu</span>
<span id="t78" class="t" style="left:1361px;top:669px;font-size:14px;line-height:20px;color:#444746;letter-spacing:-0.121px;">21 de fev. de 2024</span>
<span id="t79" class="t" style="left:1479.6px;top:669px;font-size:14px;line-height:20px;color:#444746;letter-spacing:-0.078px;">eu</span>
<span id="t80" class="t" style="left:1561px;top:669px;font-size:14px;line-height:20px;color:#444746;letter-spacing:-1.453px;">1 KB</span>
<svg class="i" style="left:1807px;top:669px;" width="20" height="20" viewBox="0 0 24 24" fill="#1f1f1f"><path d="M12 8c1.1 0 2-.9 2-2s-.9-2-2-2-2 .9-2 2 .9 2 2 2zm0 2c-1.1 0-2 .9-2 2s.9 2 2 2 2-.9 2-2-.9-2-2-2zm0 6c-1.1 0-2 .9-2 2s.9 2 2 2 2-.9 2-2-.9-2-2-2z"/></svg>
<div class="ln" style="top:702px"></div>
<div class="b" style="left:298px;top:719px;width:16px;height:16px;border-radius:2px;background:#4285f4"></div><svg class="i" style="left:301.400px;top:722.4px" width="9" height="9" viewBox="0 0 9 9" fill="#fff"><rect y="0" width="9" height="1.600"/><rect y="3.650" width="9" height="1.600"/><rect y="7.300" width="6.100" height="1.600"/></svg>
<span id="t81" class="t" style="left:334.2px;top:717px;font-size:14px;line-height:20px;color:#1f1f1f;letter-spacing:-0.183px;-webkit-text-stroke:0.1px #1f1f1f;">PE07D52A</span>
<svg class="i" style="left:409.55px;top:718.55px;" width="17.5" height="17.5" viewBox="0 0 24 24" fill="#444746"><path d="M16 11c1.66 0 2.99-1.34 2.99-3S17.66 5 16 5c-1.66 0-3 1.34-3 3s1.34 3 3 3zm-8 0c1.66 0 2.99-1.34 2.99-3S9.66 5 8 5C6.34 5 5 6.34 5 8s1.34 3 3 3zm0 2c-2.33 0-7 1.17-7 3.5V19h14v-2.500c0-2.330-4.670-3.500-7-3.500zm8 0c-.29 0-.62.02-.97.05 1.160.840 1.970 1.970 1.970 3.450V19h6v-2.500c0-2.330-4.670-3.500-7-3.500z"/></svg>
<svg class="i" style="left:1144.6px;top:713.6px;" width="26.8" height="26.8" viewBox="0 0 24 24" fill="#cbcbcb"><path d="M12 2C6.48 2 2 6.48 2 12s4.480 10 10 10 10-4.480 10-10S17.520 2 12 2zm0 3c1.660 0 3 1.340 3 3s-1.340 3-3 3-3-1.340-3-3 1.340-3 3-3zm0 14.200c-2.500 0-4.710-1.280-6-3.220.030-1.990 4-3.080 6-3.080 1.990 0 5.970 1.090 6 3.080-1.290 1.940-3.500 3.220-6 3.220z"/></svg>
<span id="t82" class="t" style="left:1178px;top:717px;font-size:14px;line-height:20px;color:#444746;letter-spacing:-0.578px;">eu</span>
<span id="t83" class="t" style="left:1361px;top:717px;font-size:14px;line-height:20px;color:#444746;letter-spacing:-0.121px;">21 de fev. de 2024</span>
<span id="t84" class="t" style="left:1479.6px;top:717px;font-size:14px;line-height:20px;color:#444746;letter-spacing:-0.078px;">eu</span>
<span id="t85" class="t" style="left:1561px;top:717px;font-size:14px;line-height:20px;color:#444746;letter-spacing:-1.453px;">1 KB</span>
<svg class="i" style="left:1807px;top:717px;" width="20" height="20" viewBox="0 0 24 24" fill="#1f1f1f"><path d="M12 8c1.1 0 2-.9 2-2s-.9-2-2-2-2 .9-2 2 .9 2 2 2zm0 2c-1.1 0-2 .9-2 2s.9 2 2 2 2-.9 2-2-.9-2-2-2zm0 6c-1.1 0-2 .9-2 2s.9 2 2 2 2-.9 2-2-.9-2-2-2z"/></svg>
<div class="ln" style="top:750px"></div>
<div class="b" style="left:298px;top:767px;width:16px;height:16px;border-radius:2px;background:#4285f4"></div><svg class="i" style="left:301.400px;top:770.4px" width="9" height="9" viewBox="0 0 9 9" fill="#fff"><rect y="0" width="9" height="1.600"/><rect y="3.650" width="9" height="1.600"/><rect y="7.300" width="6.100" height="1.600"/></svg>
<span id="t86" class="t" style="left:334.2px;top:765px;font-size:14px;line-height:20px;color:#1f1f1f;letter-spacing:-0.183px;-webkit-text-stroke:0.1px #1f1f1f;">PE07D52A</span>
<svg class="i" style="left:409.55px;top:766.55px;" width="17.5" height="17.5" viewBox="0 0 24 24" fill="#444746"><path d="M16 11c1.66 0 2.99-1.34 2.99-3S17.66 5 16 5c-1.66 0-3 1.34-3 3s1.34 3 3 3zm-8 0c1.66 0 2.99-1.34 2.99-3S9.66 5 8 5C6.34 5 5 6.34 5 8s1.34 3 3 3zm0 2c-2.33 0-7 1.17-7 3.5V19h14v-2.500c0-2.330-4.670-3.500-7-3.500zm8 0c-.29 0-.62.02-.97.05 1.160.840 1.970 1.970 1.970 3.450V19h6v-2.500c0-2.330-4.670-3.500-7-3.500z"/></svg>
<svg class="i" style="left:1144.6px;top:761.6px;" width="26.8" height="26.8" viewBox="0 0 24 24" fill="#cbcbcb"><path d="M12 2C6.48 2 2 6.48 2 12s4.480 10 10 10 10-4.480 10-10S17.520 2 12 2zm0 3c1.660 0 3 1.340 3 3s-1.340 3-3 3-3-1.340-3-3 1.340-3 3-3zm0 14.200c-2.500 0-4.710-1.280-6-3.220.030-1.990 4-3.080 6-3.080 1.990 0 5.970 1.090 6 3.080-1.290 1.940-3.500 3.220-6 3.220z"/></svg>
<span id="t87" class="t" style="left:1178px;top:765px;font-size:14px;line-height:20px;color:#444746;letter-spacing:-0.578px;">eu</span>
<span id="t88" class="t" style="left:1361px;top:765px;font-size:14px;line-height:20px;color:#444746;letter-spacing:-0.121px;">21 de fev. de 2024</span>
<span id="t89" class="t" style="left:1479.6px;top:765px;font-size:14px;line-height:20px;color:#444746;letter-spacing:-0.078px;">eu</span>
<span id="t90" class="t" style="left:1561px;top:765px;font-size:14px;line-height:20px;color:#444746;letter-spacing:-1.453px;">1 KB</span>
<svg class="i" style="left:1807px;top:765px;" width="20" height="20" viewBox="0 0 24 24" fill="#1f1f1f"><path d="M12 8c1.1 0 2-.9 2-2s-.9-2-2-2-2 .9-2 2 .9 2 2 2zm0 2c-1.1 0-2 .9-2 2s.9 2 2 2 2-.9 2-2-.9-2-2-2zm0 6c-1.1 0-2 .9-2 2s.9 2 2 2 2-.9 2-2-.9-2-2-2z"/></svg>
<div class="ln" style="top:798px"></div>
<div class="b" style="left:298px;top:815px;width:16px;height:16px;border-radius:2px;background:#4285f4"></div><span id="t91" class="t" style="left:299.85px;top:816.3px;font-size:13px;line-height:14px;color:#fff;transform:scaleX(.86);transform-origin:0 50%;">W</span>
<span id="t92" class="t" style="left:334.2px;top:813px;font-size:14px;line-height:20px;color:#1f1f1f;letter-spacing:0.272px;-webkit-text-stroke:0.1px #1f1f1f;">Cópia de 2. Carta de Opção ou Renúncia - Plano de Saúde v02.docx</span>
<svg class="i" style="left:787.55px;top:814.55px;" width="17.5" height="17.5" viewBox="0 0 24 24" fill="#444746"><path d="M16 11c1.66 0 2.99-1.34 2.99-3S17.66 5 16 5c-1.66 0-3 1.34-3 3s1.34 3 3 3zm-8 0c1.66 0 2.99-1.34 2.99-3S9.66 5 8 5C6.34 5 5 6.34 5 8s1.34 3 3 3zm0 2c-2.33 0-7 1.17-7 3.5V19h14v-2.500c0-2.330-4.670-3.500-7-3.500zm8 0c-.29 0-.62.02-.97.05 1.160.840 1.970 1.970 1.970 3.450V19h6v-2.500c0-2.330-4.670-3.500-7-3.500z"/></svg>
<svg class="i" style="left:1144.6px;top:809.6px;" width="26.8" height="26.8" viewBox="0 0 24 24" fill="#cbcbcb"><path d="M12 2C6.48 2 2 6.48 2 12s4.480 10 10 10 10-4.480 10-10S17.520 2 12 2zm0 3c1.660 0 3 1.340 3 3s-1.340 3-3 3-3-1.340-3-3 1.340-3 3-3zm0 14.200c-2.500 0-4.710-1.280-6-3.220.030-1.990 4-3.080 6-3.080 1.990 0 5.970 1.090 6 3.080-1.290 1.940-3.500 3.220-6 3.220z"/></svg>
<span id="t93" class="t" style="left:1178px;top:813px;font-size:14px;line-height:20px;color:#444746;letter-spacing:-0.578px;">eu</span>
<span id="t94" class="t" style="left:1361px;top:813px;font-size:14px;line-height:20px;color:#444746;letter-spacing:0.050px;">22 de fev. de 2024</span>
<span id="t95" class="t" style="left:1482.5px;top:813px;font-size:14px;line-height:20px;color:#444746;letter-spacing:-0.078px;">eu</span>
<span id="t96" class="t" style="left:1561px;top:813px;font-size:14px;line-height:20px;color:#444746;letter-spacing:-0.896px;">1 MB</span>
<svg class="i" style="left:1807px;top:813px;" width="20" height="20" viewBox="0 0 24 24" fill="#1f1f1f"><path d="M12 8c1.1 0 2-.9 2-2s-.9-2-2-2-2 .9-2 2 .9 2 2 2zm0 2c-1.1 0-2 .9-2 2s.9 2 2 2 2-.9 2-2-.9-2-2-2zm0 6c-1.1 0-2 .9-2 2s.9 2 2 2 2-.9 2-2-.9-2-2-2z"/></svg>
<div class="ln" style="top:846px"></div>
<div class="b" style="left:298px;top:863px;width:16px;height:16px;border-radius:2px;background:#4285f4"></div><span id="t97" class="t" style="left:299.85px;top:864.3px;font-size:13px;line-height:14px;color:#fff;transform:scaleX(.86);transform-origin:0 50%;">W</span>
<span id="t98" class="t" style="left:334.2px;top:861px;font-size:14px;line-height:20px;color:#1f1f1f;letter-spacing:0.282px;-webkit-text-stroke:0.1px #1f1f1f;">3. Carta de Opção ou Renúncia Plano Dental v02.docx</span>
<svg class="i" style="left:696.55px;top:862.55px;" width="17.5" height="17.5" viewBox="0 0 24 24" fill="#444746"><path d="M16 11c1.66 0 2.99-1.34 2.99-3S17.66 5 16 5c-1.66 0-3 1.34-3 3s1.34 3 3 3zm-8 0c1.66 0 2.99-1.34 2.99-3S9.66 5 8 5C6.34 5 5 6.34 5 8s1.34 3 3 3zm0 2c-2.33 0-7 1.17-7 3.5V19h14v-2.500c0-2.330-4.670-3.500-7-3.500zm8 0c-.29 0-.62.02-.97.05 1.160.840 1.970 1.970 1.970 3.450V19h6v-2.500c0-2.330-4.670-3.500-7-3.500z"/></svg>
<svg class="i" style="left:1144.6px;top:857.6px;" width="26.8" height="26.8" viewBox="0 0 24 24" fill="#cbcbcb"><path d="M12 2C6.48 2 2 6.48 2 12s4.480 10 10 10 10-4.480 10-10S17.520 2 12 2zm0 3c1.660 0 3 1.340 3 3s-1.340 3-3 3-3-1.340-3-3 1.340-3 3-3zm0 14.200c-2.500 0-4.710-1.280-6-3.220.030-1.990 4-3.080 6-3.080 1.990 0 5.970 1.090 6 3.080-1.290 1.940-3.500 3.220-6 3.220z"/></svg>
<span id="t99" class="t" style="left:1178px;top:861px;font-size:14px;line-height:20px;color:#444746;letter-spacing:-0.578px;">eu</span>
<span id="t100" class="t" style="left:1361px;top:861px;font-size:14px;line-height:20px;color:#444746;letter-spacing:0.050px;">23 de fev. de 2024</span>
<span id="t101" class="t" style="left:1482.5px;top:861px;font-size:14px;line-height:20px;color:#444746;letter-spacing:-0.078px;">eu</span>
<span id="t102" class="t" style="left:1561px;top:861px;font-size:14px;line-height:20px;color:#444746;letter-spacing:-0.896px;">1 MB</span>
<svg class="i" style="left:1807px;top:861px;" width="20" height="20" viewBox="0 0 24 24" fill="#1f1f1f"><path d="M12 8c1.1 0 2-.9 2-2s-.9-2-2-2-2 .9-2 2 .9 2 2 2zm0 2c-1.1 0-2 .9-2 2s.9 2 2 2 2-.9 2-2-.9-2-2-2zm0 6c-1.1 0-2 .9-2 2s.9 2 2 2 2-.9 2-2-.9-2-2-2z"/></svg>
<div class="ln" style="top:894px"></div>
<div class="b" style="left:1856px;top:175px;width:8px;height:213px;border-radius:4px;background:#cdcdcd"></div>
<svg class="i" style="left:1883px;top:82px" width="18" height="18" viewBox="0 0 19 19">
<path d="M0 2a2 2 0 0 1 2-2h12.500v4.300H4.300v10.200H0z" fill="#4285f4"/>
<path d="M14.500 0H17a2 2 0 0 1 2 2v2.300h-4.500z" fill="#1967d2"/>
<rect x="14.500" y="4.300" width="4.500" height="10.200" fill="#fbbc04"/>
<rect x="4.300" y="14.500" width="10.200" height="4.500" fill="#34a853"/>
<path d="M0 14.500h4.300V19H2a2 2 0 0 1-2-2z" fill="#188038"/>
<path d="M14.500 14.500H19L14.500 19z" fill="#ea4335"/>
<rect x="4.300" y="4.300" width="10.200" height="10.200" fill="#fff"/>
<text x="9.300" y="12.700" font-family="Liberation Sans,sans-serif" font-size="9" font-weight="700" text-anchor="middle" fill="#4285f4" letter-spacing="-.6">31</text>
</svg>
<svg class="i" style="left:1882.100px;top:137.500px" width="19.200" height="19.200" viewBox="0 0 19.200 19.200">
<rect width="19.200" height="19.200" rx="2.200" fill="#fbbc04"/>
<circle cx="9.600" cy="8" r="4.200" fill="#fff"/><rect x="7.600" y="10" width="4" height="2.200" fill="#fff"/><rect x="7.500" y="13.500" width="4.200" height="1.400" fill="#fff"/>
</svg>
<svg class="i" style="left:1881px;top:192px" width="22" height="22" viewBox="0 0 22 22" fill="none">
<circle cx="11" cy="11" r="7" stroke="#2684fc" stroke-width="2.800"/>
<path d="M5.200 2.700 L16 2.700" stroke="none"/>
<path d="M7.200 10.800l3.200 3 7.600-8.300" stroke="#2684fc" stroke-width="2.600" stroke-linejoin="miter"/>
<path d="M15.900 5l2.400-2.400 2.400 2.400-2.400 2.400z" fill="#1f63d6"/>
</svg>
<svg class="i" style="left:1885px;top:249.500px" width="14.400" height="18" viewBox="0 0 14.400 18">
<circle cx="7.100" cy="4.100" r="3.500" fill="#0b57d0"/>
<path d="M.3 13.500a4.200 4.200 0 0 1 4.200-4.200h5.300a4.200 4.200 0 0 1 4.200 4.200v2.600a1.300 1.300 0 0 1-1.300 1.300H1.600A1.300 1.300 0 0 1 .3 16.100z" fill="#6793fa"/>
<path d="M3 9.600q4.100-.6 8.200 0v7.800H3z" fill="#0b57d0"/>
</svg>
<div class="b" style="left:1882px;top:303px;width:20px;height:1px;background:#dadce0"></div>
<svg class="i" style="left:1880px;top:336px;" width="24" height="24" viewBox="0 0 24 24" fill="#1f1f1f"><path d="M19 13h-6v6h-2v-6H5v-2h6V5h2v6h6v2z"/></svg>
<svg class="i" style="left:1882px;top:881px;" width="20" height="20" viewBox="0 0 24 24" fill="#444746"><path d="M8.590 16.590L13.170 12 8.590 7.410 10 6l6 6-6 6z"/></svg>
<div class="b" style="left:0;top:0;width:1920px;height:919px;background:rgba(0,0,0,.32)"></div>
<div class="b" style="left:789px;top:359px;width:343px;height:201px;border-radius:8px;background:#fff;box-shadow:0 1px 3px rgba(0,0,0,.3),0 5px 12px 4px rgba(0,0,0,.17)"></div>
<span id="t103" class="t" style="left:814px;top:384px;font-size:24px;line-height:32px;color:#2b2b2b;letter-spacing:-0.156px;">Nova pasta</span>
<div class="b" style="left:810px;top:436px;width:301px;height:42px;border-radius:4px;border:1px solid #5c5f62;background:#fff"></div>
<span id="t104" class="t" style="left:829.7px;top:447px;font-size:14px;line-height:20px;color:#444746;letter-spacing:-0.141px;">Backup</span>
<span id="t105" class="t" style="left:975px;top:515px;font-size:14px;line-height:20px;color:#0b57d0;letter-spacing:0.424px;-webkit-text-stroke:0.1px #0b57d0;">Cancelar</span>
<span id="t106" class="t" style="left:1067px;top:515px;font-size:14px;line-height:20px;color:#0b57d0;letter-spacing:0.414px;-webkit-text-stroke:0.1px #0b57d0;">Criar</span>
<div class="b" style="left:20px;top:390px;width:54.500px;height:140px;border-radius:27.250px;background:#212121"></div>
<svg class="i" style="left:41px;top:402px" width="14" height="10" viewBox="0 0 14 10" fill="#7b7793"><circle cx="1.800" cy="1.500" r="1.250"/><circle cx="7" cy="1.500" r="1.250"/><circle cx="12.200" cy="1.500" r="1.250"/><circle cx="1.800" cy="8" r="1.250"/><circle cx="7" cy="8" r="1.250"/><circle cx="12.200" cy="8" r="1.250"/></svg>
<div class="b" style="left:25px;top:430px;width:45px;height:45px;border-radius:50%;background:#ff623f"></div>
<div class="b" style="left:38.800px;top:443.800px;width:17.500px;height:17.500px;border-radius:2.500px;background:#fff"></div>
<div class="b" style="left:42px;top:494px;width:5px;height:14px;border-radius:2px;background:#ececec"></div>
<div class="b" style="left:49.400px;top:494px;width:5px;height:14px;border-radius:2px;background:#ececec"></div>
</div></body></html>
